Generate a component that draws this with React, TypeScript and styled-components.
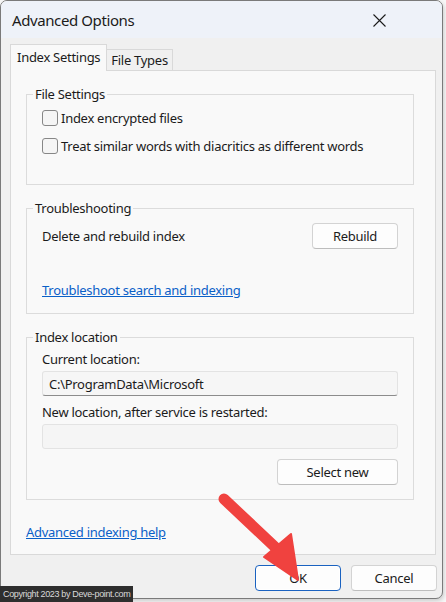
import { FC } from "react";
import styled, { createGlobalStyle, css } from "styled-components";

const FONT = `"Noto Sans", "Open Sans", sans-serif`;

const GlobalStyle = createGlobalStyle`
  html, body {
    margin: 0;
    padding: 0;
    background: #f7f7f7;
  }
  body {
    font-family: ${FONT};
    font-size: 13px;
    letter-spacing: -0.28px;
    color: #1b1b1b;
  }
`;

interface CheckOptionProps {
  label: string;
}

const CheckOption: FC<CheckOptionProps> = ({ label }) => (
  <CheckRow>
    <CheckBox />
    {label}
  </CheckRow>
);

const App: FC = () => {
  return (
    <Page>
      <GlobalStyle />
      <Window>
        <TitleBar>
          <Title>Advanced Options</Title>
          <CloseButton aria-label="Close">
            <svg width="13" height="13" viewBox="0 0 13 13">
              <path d="M0.5 0.5 L12.5 12.5 M12.5 0.5 L0.5 12.5" stroke="#1b1b1b" strokeWidth="1.1" fill="none" />
            </svg>
          </CloseButton>
        </TitleBar>

        <Body>
          <TabList>
            <Tab className="active">Index Settings</Tab>
            <Tab>File Types</Tab>
          </TabList>

          <TabPanel>
            <Group>
              <Legend>File Settings</Legend>
              <GroupContent $pt={5} $pb={28}>
                <CheckOption label="Index encrypted files" />
                <CheckOption label="Treat similar words with diacritics as different words" />
              </GroupContent>
            </Group>

            <Group>
              <Legend>Troubleshooting</Legend>
              <GroupContent $pt={6} $pb={14}>
                <SplitRow>
                  <span>Delete and rebuild index</span>
                  <Button>Rebuild</Button>
                </SplitRow>
                <Link href="#" className="spaced">Troubleshoot search and indexing</Link>
              </GroupContent>
            </Group>

            <Group>
              <Legend>Index location</Legend>
              <GroupContent $pt={4} $pb={14}>
                <FieldLabel>Current location:</FieldLabel>
                <TextBox readOnly value="C:\ProgramData\Microsoft" />
                <FieldLabel className="second">New location, after service is restarted:</FieldLabel>
                <TextBox disabled value="" />
                <ButtonRow>
                  <Button $wide>Select new</Button>
                </ButtonRow>
              </GroupContent>
            </Group>

            <HelpLink href="#">Advanced indexing help</HelpLink>
          </TabPanel>

          <Footer>
            <Button $primary>OK</Button>
            <Button>Cancel</Button>
          </Footer>
        </Body>

        <Arrow width="443" height="599" viewBox="0 0 443 599">
          <line x1="224" y1="499" x2="276" y2="548" stroke="#f0423f" strokeWidth="11" strokeLinecap="round" />
          <polygon points="298,580 264,557 291,534" fill="#f0423f" stroke="#f0423f" strokeWidth="2" strokeLinejoin="round" />
        </Arrow>
      </Window>
      <Copyright>Copyright 2023 by Deve-point.com</Copyright>
    </Page>
  );
};

export default App;

interface ButtonProps {
  $primary?: boolean;
  $wide?: boolean;
}

interface ContentProps {
  $pt: number;
  $pb: number;
}

const Page = styled.div`
  position: relative;
  width: 446px;
  height: 602px;
  overflow: hidden;
`;

const Window = styled.div`
  position: relative;
  width: 443px;
  height: 599px;
  box-sizing: border-box;
  border: 1px solid #7a7a7a;
  border-radius: 7px;
  background: #f0f0f0;
  box-shadow: 1px 2px 4px rgba(0, 0, 0, 0.18);
  overflow: hidden;
  display: flex;
  flex-direction: column;
`;

const TitleBar = styled.div`
  height: 37px;
  flex: none;
  display: flex;
  align-items: center;
  justify-content: space-between;
  padding: 0 56px 0 11px;
  background: #eef2f9;
`;

const Title = styled.div`
  font-size: 15px;
  letter-spacing: -0.4px;
  color: #1b1b1b;
  margin-top: 1px;
`;

const CloseButton = styled.div`
  display: flex;
  align-items: center;
  margin-top: 2px;
`;

const Body = styled.div`
  flex: 1;
  display: flex;
  flex-direction: column;
  padding: 6px 6px 0 9px;
`;

const TabList = styled.div`
  display: flex;
  align-items: flex-end;
  height: 26px;
  position: relative;
  z-index: 1;
`;

const Tab = styled.div`
  box-sizing: border-box;
  height: 21px;
  padding: 0 4px;
  display: flex;
  align-items: center;
  background: #f0f0f0;
  border: 1px solid #d9d9d9;
  border-bottom: none;
  border-left: none;
  font-size: 13px;
  &.active {
    height: 27px;
    margin-bottom: -1px;
    padding: 0 6px 2px;
    background: #f9f9f9;
    border-left: 1px solid #d9d9d9;
  }
`;

const TabPanel = styled.div`
  box-sizing: border-box;
  height: 485px;
  flex: none;
  background: #f9f9f9;
  border: 1px solid #d9d9d9;
  padding: 14px 21px 0 15px;
  display: flex;
  flex-direction: column;
  gap: 14px;
`;

const Group = styled.fieldset`
  margin: 0;
  min-width: 0;
  padding: 0 0 0 6px;
  border: 1px solid #dcdcdc;
`;

const Legend = styled.legend`
  padding: 0 2px;
  line-height: 18px;
  font-size: 13px;
  color: #1b1b1b;
`;

const GroupContent = styled.div<ContentProps>`
  display: flex;
  flex-direction: column;
  padding: ${(p) => p.$pt}px 15px ${(p) => p.$pb}px 9px;
`;

const CheckRow = styled.label`
  display: flex;
  align-items: center;
  gap: 3px;
  height: 20px;
  & + & {
    margin-top: 8px;
  }
`;

const CheckBox = styled.span`
  box-sizing: border-box;
  width: 16px;
  height: 16px;
  border: 1px solid #878787;
  border-radius: 3px;
  background: #f5f5f5;
  flex: none;
`;

const SplitRow = styled.div`
  display: flex;
  align-items: center;
  justify-content: space-between;
`;

const Link = styled.a`
  color: #0a60c8;
  text-decoration: underline;
  line-height: 18px;
  align-self: flex-start;
  &.spaced {
    margin-top: 32px;
  }
`;

const HelpLink = styled(Link)`
  margin-top: 9px;
`;

const FieldLabel = styled.div`
  line-height: 18px;
  &.second {
    margin-top: 7px;
  }
`;

const TextBox = styled.input`
  box-sizing: border-box;
  height: 25px;
  margin-top: 3px;
  padding: 0 6px;
  font-family: ${FONT};
  font-size: 13px;
  letter-spacing: -0.28px;
  color: #1b1b1b;
  background: #f6f6f6;
  border: 1px solid #e3e3e3;
  border-bottom-color: #8c8c8c;
  border-radius: 3px;
  outline: none;
  &:disabled {
    margin-top: 3px;
    background: #f5f5f5;
    border-bottom-color: #e3e3e3;
  }
`;

const ButtonRow = styled.div`
  display: flex;
  justify-content: flex-end;
  margin-top: 10px;
`;

const Button = styled.button<ButtonProps>`
  box-sizing: border-box;
  width: ${(p) => (p.$wide ? 121 : 86)}px;
  height: 26px;
  padding: 0;
  font-family: ${FONT};
  font-size: 13px;
  letter-spacing: -0.28px;
  color: #1b1b1b;
  background: #fdfdfd;
  border: 1px solid #d3d3d3;
  border-bottom-color: #bdbdbd;
  border-radius: 4px;
  ${(p) =>
    p.$primary &&
    css`
      border: 1px solid #1a62c0;
      box-shadow: inset 0 0 0 1px #ffffff;
    `}
`;

const Footer = styled.div`
  display: flex;
  justify-content: flex-end;
  gap: 10px;
  padding-top: 10px;
  margin-right: -1px;
`;

const Arrow = styled.svg`
  position: absolute;
  left: -1px;
  top: -1px;
  pointer-events: none;
`;

const Copyright = styled.div`
  position: absolute;
  left: 0;
  top: 586px;
  height: 16px;
  padding: 0 3px 0 3px;
  display: flex;
  align-items: center;
  background: #2e2e2e;
  color: #d9d9d9;
  font-family: "Liberation Sans", Arial, sans-serif;
  font-size: 9px;
  letter-spacing: -0.35px;
`;
